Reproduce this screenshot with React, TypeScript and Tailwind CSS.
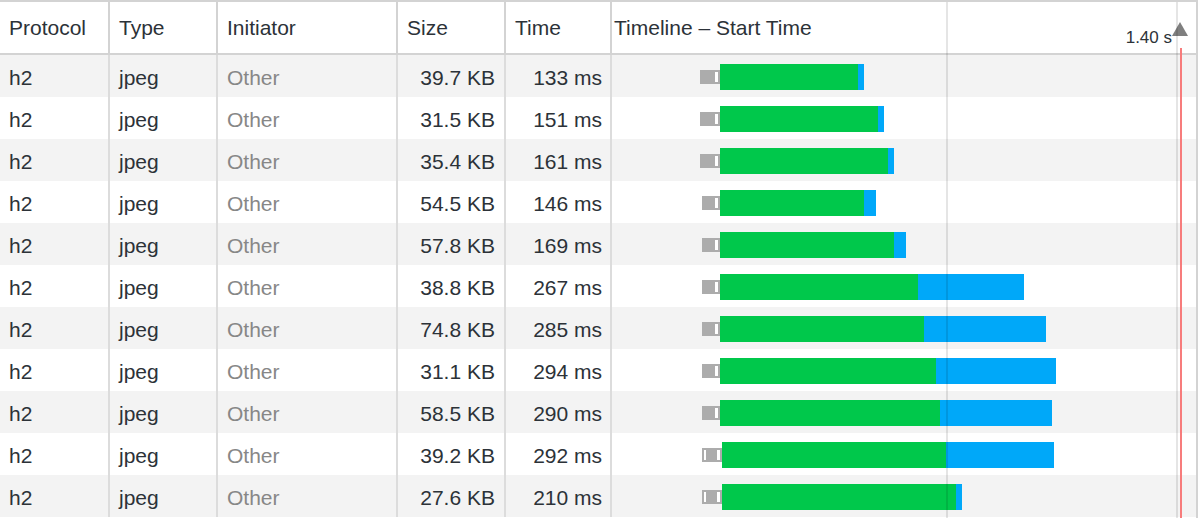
const rows = [
  { size: "39.7 KB", time: "133 ms", stub: 700, start: 720, green: 858, blue: 864, hollow: false },
  { size: "31.5 KB", time: "151 ms", stub: 700, start: 720, green: 878, blue: 884, hollow: false },
  { size: "35.4 KB", time: "161 ms", stub: 700, start: 720, green: 888, blue: 894, hollow: false },
  { size: "54.5 KB", time: "146 ms", stub: 702, start: 720, green: 864, blue: 876, hollow: false },
  { size: "57.8 KB", time: "169 ms", stub: 702, start: 720, green: 894, blue: 906, hollow: false },
  { size: "38.8 KB", time: "267 ms", stub: 702, start: 720, green: 918, blue: 1024, hollow: false },
  { size: "74.8 KB", time: "285 ms", stub: 702, start: 720, green: 924, blue: 1046, hollow: false },
  { size: "31.1 KB", time: "294 ms", stub: 702, start: 720, green: 936, blue: 1056, hollow: false },
  { size: "58.5 KB", time: "290 ms", stub: 702, start: 720, green: 940, blue: 1052, hollow: false },
  { size: "39.2 KB", time: "292 ms", stub: 702, start: 722, green: 946, blue: 1054, hollow: true },
  { size: "27.6 KB", time: "210 ms", stub: 702, start: 722, green: 956, blue: 962, hollow: true },
];

// timeline column begins at x=612
const T0 = 612;

export default function App() {
  return (
    <div className="relative w-[1198px] h-[518px] overflow-hidden bg-white border-t-2 border-r-2 border-[#d3d3d3] font-['Liberation_Sans',Arial,sans-serif] text-[21px] text-[#2c3238]">
      <div className="grid grid-cols-[110px_108px_180px_108px_106px_1fr] h-[53px] border-b-2 border-[#d3d3d3]">
        <HeadCell>Protocol</HeadCell>
        <HeadCell>Type</HeadCell>
        <HeadCell>Initiator</HeadCell>
        <HeadCell className="pl-[8px]">Size</HeadCell>
        <HeadCell>Time</HeadCell>
        <div className="relative flex items-center pl-[2px] whitespace-nowrap">
          Timeline – Start Time
          <span className="absolute right-[24px] top-[27px] text-[17px] leading-none">1.40 s</span>
          <svg className="absolute right-[8px] top-[20px]" width="16" height="14" viewBox="0 0 16 14">
            <polygon points="8,0 16,14 0,14" fill="#7f7f7f" />
          </svg>
        </div>
      </div>

      {rows.map((r, i) => (
        <div
          key={i}
          className={`grid grid-cols-[110px_108px_180px_108px_106px_1fr] h-[42px] ${
            i % 2 === 0 ? "bg-[#f3f3f3]" : "bg-white"
          }`}
        >
          <Cell>h2</Cell>
          <Cell>jpeg</Cell>
          <Cell className="text-[#878787]">Other</Cell>
          <Cell className="justify-end pr-[9px]">{r.size}</Cell>
          <Cell className="justify-end pr-[8px]">{r.time}</Cell>
          <div className="relative">
            <div
              className="absolute top-[15px] h-[14px] bg-[#acacac]"
              style={{ left: r.stub - T0, width: r.start - r.stub }}
            >
              {r.hollow && <div className="absolute left-[2px] top-[2px] w-[2px] h-[10px] bg-white" />}
              <div className="absolute right-[2px] top-[2px] w-[3px] h-[10px] bg-white" />
            </div>
            <div
              className="absolute top-[9px] h-[26px] bg-[#00c84b]"
              style={{ left: r.start - T0, width: r.green - r.start }}
            />
            <div
              className="absolute top-[9px] h-[26px] bg-[#00a8f9]"
              style={{ left: r.green - T0, width: r.blue - r.green }}
            />
          </div>
        </div>
      ))}

      {/* timeline grid lines and load marker */}
      <div className="absolute left-[946px] top-0 bottom-0 w-[2px] bg-black/10" />
      <div className="absolute left-[1176px] top-0 bottom-0 w-[2px] bg-black/10" />
      <div className="absolute left-[1180px] top-[46px] bottom-0 w-[2px] bg-[#f77c7c]" />
    </div>
  );
}

function HeadCell({ children, className = "" }: any) {
  return (
    <div className={`flex items-center pl-[9px] border-r-2 border-[#d3d3d3] whitespace-nowrap ${className}`}>
      {children}
    </div>
  );
}

function Cell({ children, className = "" }: any) {
  return (
    <div className={`flex items-center pt-[3px] pl-[9px] border-r-2 border-[#dcdcdc] whitespace-nowrap ${className}`}>
      {children}
    </div>
  );
}
